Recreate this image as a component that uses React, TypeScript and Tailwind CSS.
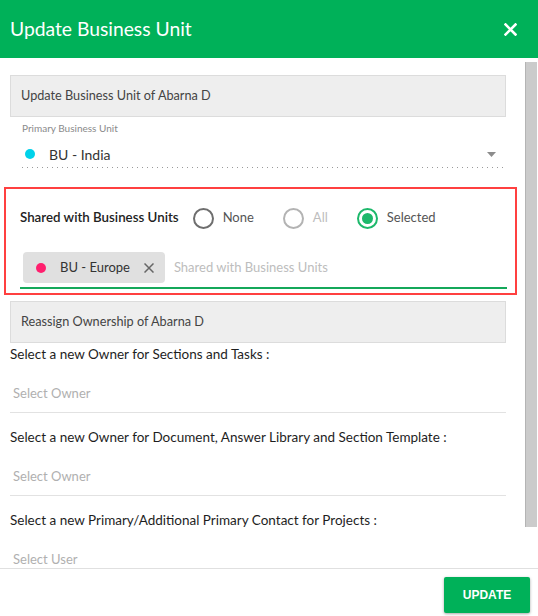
import React from "react";

const font = { fontFamily: "Lato, 'Open Sans', sans-serif" };

function Radio({ label, state }: { label: string; state: "off" | "disabled" | "on" }) {
  const ring =
    state === "on"
      ? "border-[#1db86b]"
      : state === "disabled"
      ? "border-[#b3b3b3]"
      : "border-[#6e6e6e]";
  const text = state === "disabled" ? "text-[#bdbdbd]" : "text-[#555]";
  return (
    <div className="flex items-center gap-[9px]">
      <span className={`w-[21px] h-[21px] rounded-full border-2 ${ring} flex items-center justify-center`}>
        {state === "on" && <span className="w-[11px] h-[11px] rounded-full bg-[#1db86b]" />}
      </span>
      <span className={`text-[13px] ${text}`}>{label}</span>
    </div>
  );
}

function OwnerField({ title, placeholder, first }: { title: string; placeholder: string; first?: boolean }) {
  return (
    <div>
      <div className={`text-[13.5px] leading-[18px] text-[#1e1e1e] ${first ? "mt-[2px]" : "mt-[15px]"}`}>{title}</div>
      <div className="pt-[21px] pb-[10px] pl-[3px] border-b border-[#e2e2e2] text-[13px] leading-[18px] text-[#b0b0b0]">
        {placeholder}
      </div>
    </div>
  );
}

export default function App() {
  return (
    <div className="w-[538px] h-[616px] flex flex-col bg-white overflow-hidden" style={font}>
      {/* Header */}
      <div className="h-[58px] shrink-0 bg-[#00b159] flex items-center justify-between pl-[10px] pr-[21px]">
        <h1 className="text-white text-[19.3px] leading-none">Update Business Unit</h1>
        <svg width="13" height="13" viewBox="0 0 13 13" fill="none" stroke="white" strokeWidth="2.6" strokeLinecap="square">
          <path d="M1.5 1.5 L11.5 11.5 M11.5 1.5 L1.5 11.5" />
        </svg>
      </div>

      {/* Body */}
      <div className="flex flex-1 min-h-0">
        <div className="flex-1 min-w-0 overflow-hidden pl-[10px] pr-[19px] pt-[17px]">
          <div className="h-[42px] bg-[#eeeeee] border border-[#dcdcdc] flex items-center pl-[10px] text-[12.7px] text-[#444]">
            Update Business Unit of Abarna D
          </div>

          {/* Primary business unit */}
          <div className="ml-[12px] mr-[3px] mt-[5px]">
            <div className="text-[10px] leading-[12px] text-[#8a8a8a]">Primary Business Unit</div>
            <div className="mt-[7px] h-[26px] flex items-center">
              <span className="ml-[3px] w-[10px] h-[10px] rounded-full bg-[#00d2ea]" />
              <span className="ml-[14px] text-[14px] text-[#333]">BU - India</span>
              <svg className="ml-auto mr-[7px]" width="9" height="5" viewBox="0 0 9 5">
                <path d="M0 0 L9 0 L4.5 5 Z" fill="#8c8c8c" />
              </svg>
            </div>
            <div className="h-px bg-[linear-gradient(to_right,#9a9a9a_1px,transparent_1px)] bg-[length:5px_1px] bg-repeat-x" />
          </div>

          {/* Shared with business units */}
          <div className="mt-[19px] -ml-[6px] -mr-[11px] border-2 border-[#ff4040] pl-[14px] pr-[8px] pt-[17px] pb-[4px]">
            <div className="h-[24px] flex items-center">
              <span className="text-[13.3px] text-[#222] font-semibold mr-[14px]">Shared with Business Units</span>
              <div className="flex items-center gap-[29px]">
                <Radio label="None" state="off" />
                <Radio label="All" state="disabled" />
                <Radio label="Selected" state="on" />
              </div>
            </div>
            <div className="mt-[22px] pb-[4px] border-b-2 border-[#14a85a] flex items-center">
              <div className="ml-[3px] h-[31px] bg-[#e0e0e0] rounded-[4px] flex items-center pl-[13px] pr-[11px]">
                <span className="w-[10px] h-[10px] rounded-full bg-[#ff1f6e]" />
                <span className="ml-[14px] text-[13px] text-[#333]">BU - Europe</span>
                <svg className="ml-[14px]" width="10" height="10" viewBox="0 0 10 10" stroke="#666" strokeWidth="1.5">
                  <path d="M0.5 0.5 L9.5 9.5 M9.5 0.5 L0.5 9.5" />
                </svg>
              </div>
              <span className="ml-[9px] text-[13px] text-[#bdbdbd]">Shared with Business Units</span>
            </div>
          </div>

          <div className="mt-[6px] h-[42px] bg-[#eeeeee] border border-[#dcdcdc] flex items-center pl-[10px] text-[12.7px] text-[#444]">
            Reassign Ownership of Abarna D
          </div>

          <OwnerField first title="Select a new Owner for Sections and Tasks :" placeholder="Select Owner" />
          <OwnerField
            title="Select a new Owner for Document, Answer Library and Section Template :"
            placeholder="Select Owner"
          />
          <OwnerField title="Select a new Primary/Additional Primary Contact for Projects :" placeholder="Select User" />
        </div>

        {/* Scrollbar */}
        <div className="w-[13px] shrink-0 pt-[4px] pr-px">
          <div className="h-[465px] bg-[#cbcbcb] border-l border-[#b4b4b4]" />
        </div>
      </div>

      {/* Footer */}
      <div className="h-[48px] shrink-0 border-t border-[#e0e0e0] flex justify-end items-start pt-[8px] pr-[8px]">
        <button
          className="w-[86px] h-[36px] bg-[#00b159] rounded-[2px] text-white text-[12px] font-bold shadow-[0_1px_3px_rgba(0,0,0,0.35)]"
          style={{ fontFamily: "'Liberation Sans', Arial, sans-serif" }}
        >
          UPDATE
        </button>
      </div>
    </div>
  );
}
